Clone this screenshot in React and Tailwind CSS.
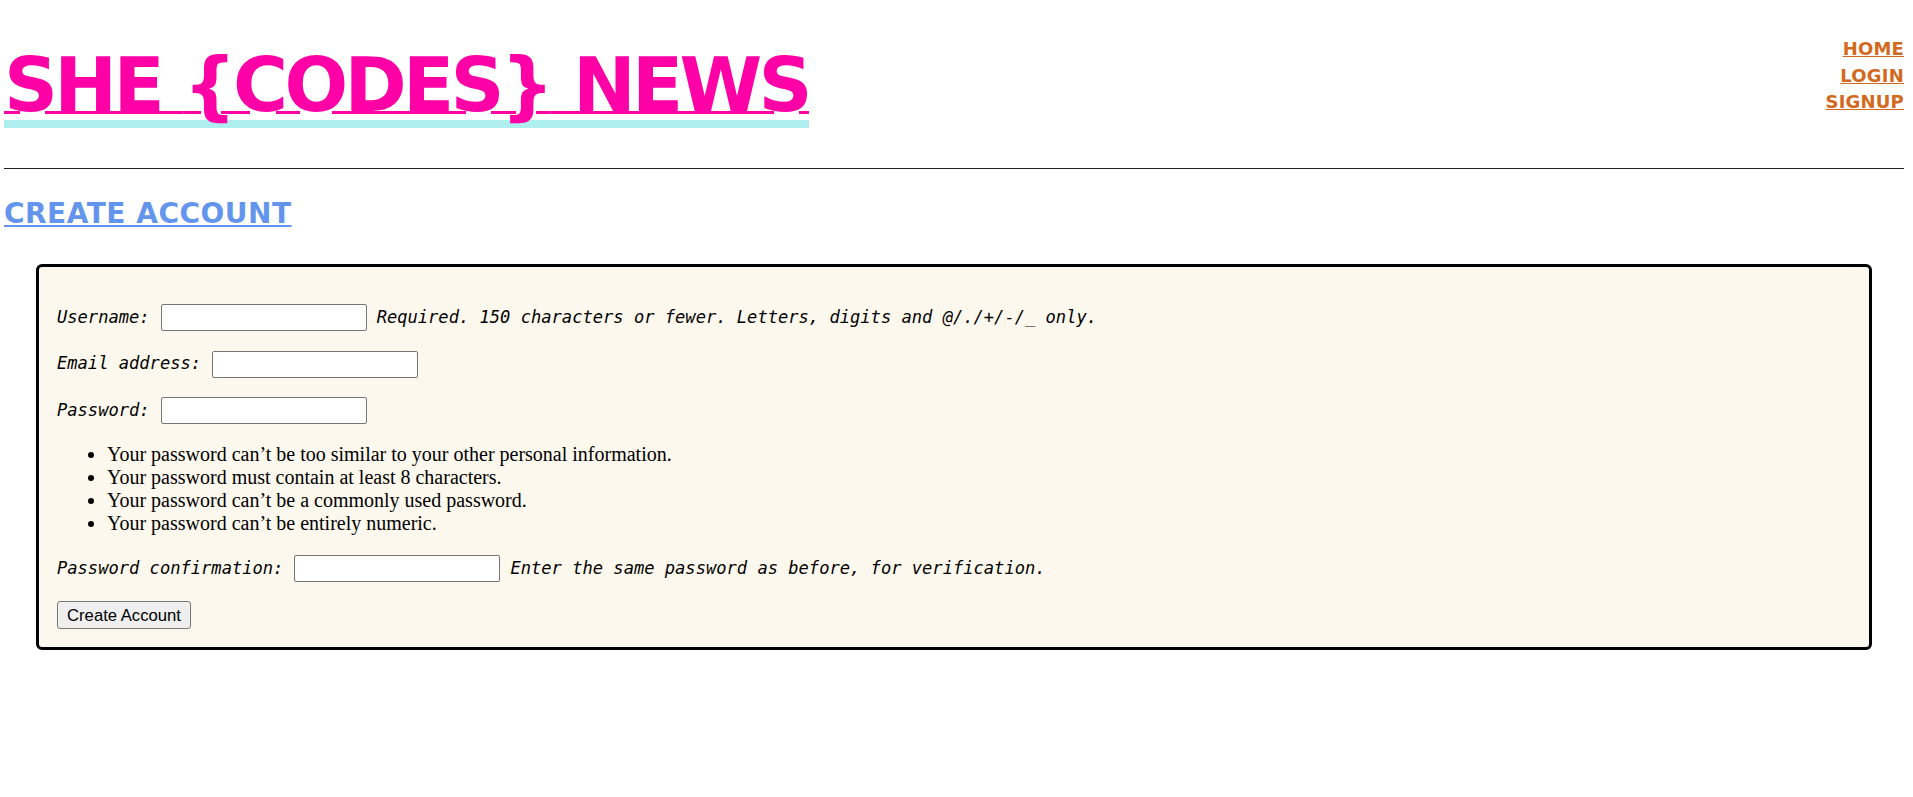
const mono = "font-['DejaVu_Sans_Mono',monospace] italic text-[17.1px] text-black";

function Field({ label, help, inputGap = "ml-[11px]" }) {
  return (
    <div className="flex items-center h-[27px]">
      <span className={mono}>{label}</span>
      <input
        type="text"
        className={`${inputGap} w-[206px] h-[27px] bg-white border border-[#767676] rounded-[2px] outline-none`}
      />
      {help && <span className={`${mono} ml-[10px]`}>{help}</span>}
    </div>
  );
}

export default function App() {
  return (
    <div className="min-h-screen bg-white pl-1 pr-[9px] pb-10">
      {/* Header */}
      <div className="flex items-start justify-between">
        <a href="#" className="inline-block mt-[51px] border-b-8 border-[#afeeee]">
          <span className="block font-['DejaVu_Sans',sans-serif] font-bold text-[75px] leading-[69px] tracking-[-3.7px] text-[#ff00a6] underline decoration-[3px] underline-offset-0 whitespace-nowrap">
            SHE {"{CODES}"} NEWS
          </span>
        </a>
        <nav className="flex flex-col items-end mt-[36px] font-['DejaVu_Sans',sans-serif] font-bold text-[18px] leading-[26.5px] tracking-[0.2px] text-[#d2691e]">
          <a href="#" className="underline">HOME</a>
          <a href="#" className="underline">LOGIN</a>
          <a href="#" className="underline">SIGNUP</a>
        </nav>
      </div>

      <div className="mt-[40px] h-px bg-[#222]" />

      <h2 className="mt-[31px] font-['DejaVu_Sans',sans-serif] font-bold text-[28px] leading-[28px] tracking-[0.5px] text-[#6495ed]">
        <a href="#" className="underline">CREATE ACCOUNT</a>
      </h2>

      {/* Form */}
      <form className="mt-[36px] mx-[32px] border-[3px] border-black rounded-[6px] bg-[#fdf8ee] pl-[18px] pt-[37px] pb-[18px]">
        <Field label="Username:" help="Required. 150 characters or fewer. Letters, digits and @/./+/-/_ only." />
        <div className="mt-[19.5px]">
          <Field label="Email address:" />
        </div>
        <div className="mt-[19.5px]">
          <Field label="Password:" />
        </div>
        <ul className="mt-[18.5px] pl-[50px] list-disc font-['Liberation_Serif',serif] text-[20px] leading-[23px] text-black">
          <li>Your password can’t be too similar to your other personal information.</li>
          <li>Your password must contain at least 8 characters.</li>
          <li>Your password can’t be a commonly used password.</li>
          <li>Your password can’t be entirely numeric.</li>
        </ul>
        <div className="mt-[20.5px]">
          <Field label="Password confirmation:" help="Enter the same password as before, for verification." />
        </div>
        <button
          type="button"
          className="mt-[19px] block w-[134px] h-[28px] bg-[#efefef] border border-[#767676] rounded-[3px] font-['Liberation_Sans',Arial,sans-serif] text-[16.67px] text-black"
        >
          Create Account
        </button>
      </form>
    </div>
  );
}
